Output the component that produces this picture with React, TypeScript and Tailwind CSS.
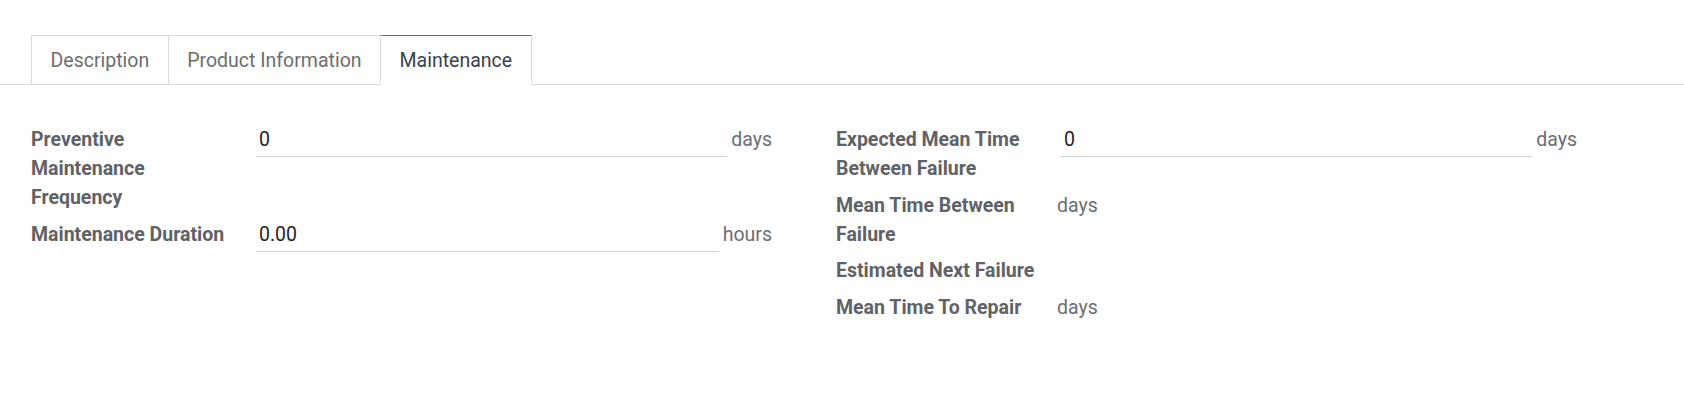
import React from "react";

const Tab = ({ label, active, first }: { label: string; active?: boolean; first?: boolean }) => (
  <div
    className={
      "-mb-px border px-[18.5px] pt-[10px] pb-[9px] leading-[29px] " +
      (first ? "" : "-ml-px ") +
      (active
        ? "border-[#d8dadd] border-t-[#875a7b] border-b-white bg-white text-[#374151] relative z-10"
        : "border-[#d8dadd] text-[#6b6e72]")
    }
  >
    {label}
  </div>
);

const Label = ({ children }: { children: React.ReactNode }) => (
  <div className="font-bold text-[#5f6266] leading-[29px] pr-[8px]">{children}</div>
);

const InputField = ({ value, unit }: { value: string; unit: string }) => (
  <div className="flex items-start">
    <div className="flex-1 border-b border-[#cfd2d6] pl-[3px] pt-0 pb-[2px] leading-[29px] text-[#1f2328]">
      {value}
    </div>
    <div className="ml-[4px] leading-[29px] text-[#6b6e72]">{unit}</div>
  </div>
);

const ReadUnit = ({ unit }: { unit: string }) => (
  <div className="leading-[29px] text-[#6b6e72]">{unit}</div>
);

export default function App() {
  return (
    <div className="w-[1684px] h-[407px] bg-white font-['Roboto',sans-serif] text-[19.5px]">
      <div className="pt-[35px]">
        <div className="flex border-b border-[#d8dadd] pl-[31px]">
          <Tab label="Description" first />
          <Tab label="Product Information" />
          <Tab label="Maintenance" active />
        </div>
      </div>
      <div className="flex items-start pl-[31px] pt-[40px] gap-[64px]">
        <div className="w-[741px] grid grid-cols-[225px_1fr] gap-y-[7.5px] items-start content-start">
          <Label>
            Preventive
            <br />
            Maintenance
            <br />
            Frequency
          </Label>
          <InputField value="0" unit="days" />
          <Label>Maintenance Duration</Label>
          <InputField value="0.00" unit="hours" />
        </div>
        <div className="w-[741px] grid grid-cols-[221px_1fr] gap-y-[7.5px] items-start content-start">
          <Label>
            Expected Mean Time
            <br />
            Between Failure
          </Label>
          <div className="pl-[4px]">
            <InputField value="0" unit="days" />
          </div>
          <Label>
            Mean Time Between
            <br />
            Failure
          </Label>
          <ReadUnit unit="days" />
          <Label>Estimated Next Failure</Label>
          <div />
          <Label>Mean Time To Repair</Label>
          <ReadUnit unit="days" />
        </div>
      </div>
    </div>
  );
}
